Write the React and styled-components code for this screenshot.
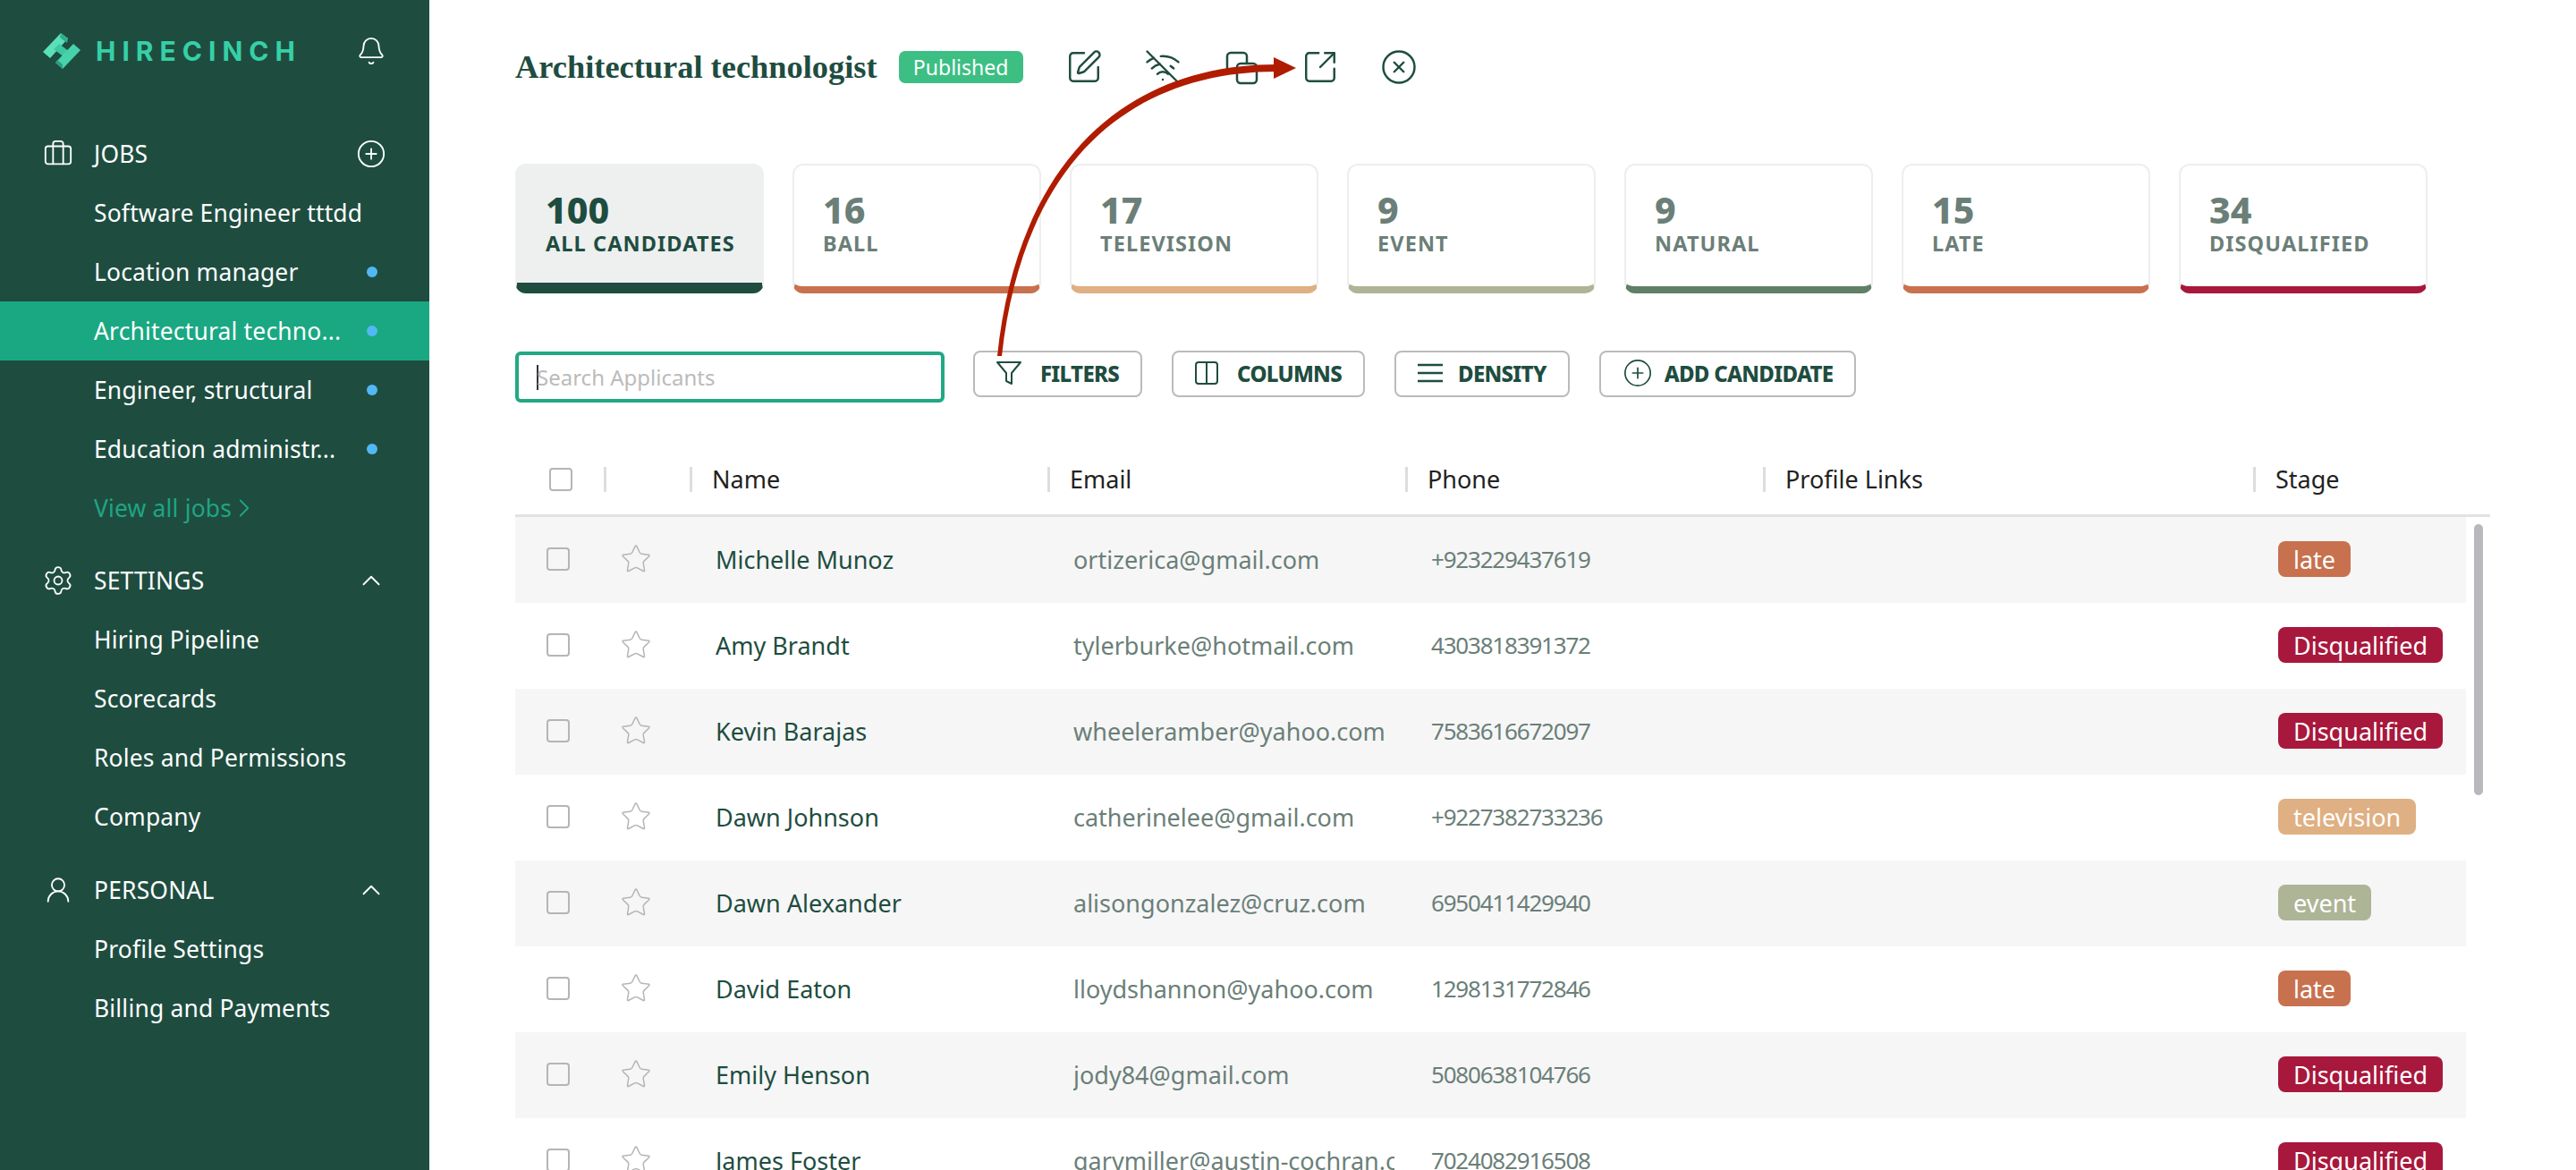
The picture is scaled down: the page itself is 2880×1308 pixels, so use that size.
import React from 'react';
import styled, { createGlobalStyle } from 'styled-components';
import {
  Bell,
  Briefcase,
  ChevronRight,
  ChevronUp,
  CirclePlus,
  CircleX,
  Settings,
  SquareArrowOutUpRight,
  SquarePen,
  Star,
  UserRound,
  WifiOff,
} from 'lucide-react';

const GREEN = '#1e4d40';
const MUTED = '#6b7f78';
const FONT = '"Noto Sans", "Open Sans", sans-serif';

const STAGES = {
  late: '#c8714f',
  Disqualified: '#a8183c',
  television: '#dfb083',
  event: '#adb596',
};

const CARDS = [
  { count: 100, label: 'ALL CANDIDATES', color: GREEN, active: true },
  { count: 16, label: 'BALL', color: '#c8714f' },
  { count: 17, label: 'TELEVISION', color: '#dfb083' },
  { count: 9, label: 'EVENT', color: '#adb596' },
  { count: 9, label: 'NATURAL', color: '#5f7f66' },
  { count: 15, label: 'LATE', color: '#c8714f' },
  { count: 34, label: 'DISQUALIFIED', color: '#a8183c' },
];

const PEOPLE = [
  ['Michelle Munoz', 'ortizerica@gmail.com', '+923229437619', 'late'],
  ['Amy Brandt', 'tylerburke@hotmail.com', '4303818391372', 'Disqualified'],
  ['Kevin Barajas', 'wheeleramber@yahoo.com', '7583616672097', 'Disqualified'],
  ['Dawn Johnson', 'catherinelee@gmail.com', '+9227382733236', 'television'],
  ['Dawn Alexander', 'alisongonzalez@cruz.com', '6950411429940', 'event'],
  ['David Eaton', 'lloydshannon@yahoo.com', '1298131772846', 'late'],
  ['Emily Henson', 'jody84@gmail.com', '5080638104766', 'Disqualified'],
  ['James Foster', 'garymiller@austin-cochran.com', '7024082916508', 'Disqualified'],
];

const GlobalStyle = createGlobalStyle`
  html, body {
    margin: 0;
    height: 100%;
    overflow: hidden;
    background: #fff;
    font-family: ${FONT};
  }
  * { box-sizing: border-box; }
`;

const Page = styled.div`
  position: relative;
  display: flex;
  width: 2880px;
  height: 1308px;
  overflow: hidden;
`;

const Sidebar = styled.aside`
  flex: 0 0 480px;
  background: ${GREEN};
  color: #fff;
`;

const Brand = styled.div`
  display: flex;
  align-items: center;
  height: 114px;
  padding: 0 48px 0 48px;
  margin-bottom: 25px;
`;

const BrandName = styled.span`
  margin-left: 17px;
  font: 700 30px Inter, sans-serif;
  letter-spacing: 7px;
  color: #36d0a6;
  flex: 1;
`;

const SectionHead = styled.div`
  display: flex;
  align-items: center;
  height: 66px;
  padding: 0 48px 0 47px;
  margin-top: ${(p) => p.$gap || 0}px;
  font-size: 26.4px;
  letter-spacing: 0.2px;
`;

const SectionIcon = styled.span`
  display: flex;
  justify-content: center;
  width: 36px;
  margin-right: 22px;
`;

const SectionTitle = styled.span`
  flex: 1;
`;

const Item = styled.div`
  display: flex;
  align-items: center;
  height: 66px;
  padding: 0 50px 0 105px;
  font-size: 26.4px;
  letter-spacing: 0.2px;
  background: ${(p) => (p.$active ? '#1aa882' : 'transparent')};
`;

const ItemText = styled.span`
  flex: 1;
  white-space: nowrap;
`;

const Dot = styled.span`
  width: 12px;
  height: 12px;
  margin-right: 8px;
  border-radius: 50%;
  background: #52b8f5;
`;

const ViewAll = styled(Item)`
  color: #1fa583;

  svg {
    margin-left: -3px;
  }
`;

const Main = styled.main`
  flex: 1;
  min-width: 0;
  padding: 40px 96px 0;
`;

const TitleRow = styled.div`
  display: flex;
  align-items: center;
  height: 70px;
  margin-bottom: 73px;
  color: ${GREEN};
`;

const Title = styled.h1`
  margin: 0 24px 0 0;
  font: 700 36.4px "Liberation Serif", serif;
  white-space: nowrap;
`;

const Badge = styled.span`
  display: flex;
  align-items: center;
  justify-content: center;
  width: 139px;
  height: 36px;
  border-radius: 7px;
  background: #3dbf84;
  color: #fff;
  font-size: 23px;
`;

const TitleIcons = styled.div`
  display: flex;
  align-items: center;
  gap: 46px;
  margin-left: 47px;
`;

const Cards = styled.div`
  display: flex;
  gap: 32px;
  margin-bottom: 64px;
`;

const Card = styled.div`
  width: 278px;
  height: 145px;
  padding: 27px 32px 0;
  border: 2px solid #eee;
  border-bottom: ${(p) => (p.$active ? 12 : 8)}px solid ${(p) => p.$color};
  border-radius: 12px;
  background: ${(p) => (p.$active ? '#eeefef' : '#fff')};
  border-color: ${(p) => (p.$active ? '#eeefef' : '#eee')};
  border-bottom-color: ${(p) => p.$color};
  color: ${(p) => (p.$active ? GREEN : MUTED)};
`;

const CardCount = styled.div`
  font-size: 41px;
  font-weight: 800;
  line-height: 44px;
`;

const CardLabel = styled.div`
  margin-top: 1px;
  font-size: 23.5px;
  font-weight: 700;
  line-height: 30px;
  letter-spacing: 1.1px;
  white-space: nowrap;
`;

const Toolbar = styled.div`
  display: flex;
  align-items: flex-start;
  height: 58px;
  margin-bottom: 43px;
`;

const Search = styled.div`
  display: flex;
  align-items: center;
  width: 480px;
  height: 57px;
  margin: 1px 32px 0 0;
  padding-left: 20px;
  border: 4px solid #22a884;
  border-radius: 6px;
  font-size: 24px;
  color: #bbb;
`;

const Caret = styled.span`
  width: 2px;
  height: 28px;
  margin-right: -2px;
  background: #333;
`;

const Button = styled.div`
  display: flex;
  align-items: center;
  height: 52px;
  margin-right: 33px;
  padding: 0 24px 2px;
  gap: ${(p) => p.$gap}px;
  border: 2px solid #bbb;
  border-radius: 8px;
  color: ${GREEN};
  font-size: 24px;
  font-weight: 800;
  letter-spacing: -0.7px;
  white-space: nowrap;
`;

const COLUMNS = '99px 96px 400px 400px 400px 548px 1fr';

const HeadRow = styled.div`
  display: grid;
  grid-template-columns: ${COLUMNS};
  align-items: center;
  width: 2208px;
  height: 85px;
  padding-top: 3px;
  border-bottom: 3px solid #e2e2e2;
  color: #222;
  font-size: 27px;
`;

const HeadCell = styled.div`
  display: flex;
  align-items: center;
  height: 28px;
  padding-left: 22px;
  border-left: ${(p) => (p.$plain ? 'none' : '3px solid #ddd')};
`;

const HeadCheck = styled.div`
  width: 26px;
  height: 26px;
  margin-left: 16px;
  border: 2px solid #b5b5b5;
  border-radius: 4px;
`;

const Scroller = styled.div`
  position: relative;
  width: 2208px;
`;

const ScrollThumb = styled.div`
  position: absolute;
  top: 8px;
  right: 8px;
  width: 10px;
  height: 303px;
  border-radius: 5px;
  background: #b8b9bc;
`;

const Row = styled.div`
  display: grid;
  grid-template-columns: ${COLUMNS};
  align-items: center;
  width: 2181px;
  height: 96px;
  padding-bottom: 2px;
  background: ${(p) => (p.$odd ? '#f6f6f7' : '#fff')};
  font-size: 27px;
`;

const RowCheck = styled.div`
  width: 26px;
  height: 26px;
  margin-left: 35px;
  border: 2px solid #b5b5b5;
  border-radius: 4px;
`;

const StarCell = styled.div`
  display: flex;
  padding-left: 18px;
  color: #b5b5b5;
`;

const NameCell = styled.div`
  padding-left: 29px;
  color: ${GREEN};
`;

const MutedCell = styled.div`
  width: 359px;
  margin-left: 29px;
  overflow: hidden;
  white-space: nowrap;
  color: ${MUTED};
`;

const PhoneCell = styled(MutedCell)`
  font-size: 26px;
  letter-spacing: -1.2px;
`;

const StageCell = styled.div`
  padding-left: 28px;
`;

const Chip = styled.span`
  display: inline-flex;
  align-items: center;
  height: 40px;
  padding: 0 17px;
  border-radius: 8px;
  background: ${(p) => p.$color};
  color: #fff;
  font-size: 27px;
`;

const Overlay = styled.svg`
  position: absolute;
  top: 0;
  left: 0;
  pointer-events: none;
`;

const Logo = () => (
  <svg width="42" height="40" viewBox="0 0 42 40" fill="none">
    <path d="M0 21 20 0l8 6L8 28z" fill="#5ce0ba" />
    <path d="M20 0l8 6-1 5-8-6z" fill="#2fae8f" />
    <path d="M12 18l6-6 12 9-6 6z" fill="#3cc9a2" />
    <path d="M14 33 34 12l8 7-20 21z" fill="#46d3ac" />
    <path d="M14 33l8 7 0-5-6-5z" fill="#2a9d81" />
  </svg>
);

const CopyIcon = () => (
  <svg width="42" height="42" viewBox="0 0 42 42" fill="none" stroke={GREEN} strokeWidth="2.5">
    <path d="M5 27V9a4 4 0 0 1 4-4h14a4 4 0 0 1 4 4v7" />
    <rect x="16" y="17" width="22" height="22" rx="4" />
  </svg>
);

const FilterIcon = () => (
  <svg width="28" height="26" viewBox="0 0 28 26" fill="none" stroke={GREEN} strokeWidth="2">
    <path d="M1 1h26L17 13v12l-6-3V13z" strokeLinejoin="round" />
  </svg>
);

const ColumnsIcon = () => (
  <svg width="26" height="26" viewBox="0 0 26 26" fill="none" stroke={GREEN} strokeWidth="2">
    <rect x="1" y="1" width="24" height="24" rx="3" />
    <path d="M13 1v24" />
  </svg>
);

const DensityIcon = () => (
  <svg width="28" height="22" viewBox="0 0 28 22" fill="none" stroke={GREEN} strokeWidth="2.4">
    <path d="M0 2h28M0 11h28M0 20h28" />
  </svg>
);

const App = () => (
  <Page>
    <GlobalStyle />
    <Sidebar>
      <Brand>
        <Logo />
        <BrandName>HIRECINCH</BrandName>
        <Bell size={34} strokeWidth={1.3} />
      </Brand>
      <SectionHead>
        <SectionIcon><Briefcase size={34} strokeWidth={1.3} /></SectionIcon>
        <SectionTitle>JOBS</SectionTitle>
        <CirclePlus size={34} strokeWidth={1.3} />
      </SectionHead>
      <Item><ItemText>Software Engineer tttdd</ItemText></Item>
      <Item><ItemText>Location manager</ItemText><Dot /></Item>
      <Item $active><ItemText>Architectural techno...</ItemText><Dot /></Item>
      <Item><ItemText>Engineer, structural</ItemText><Dot /></Item>
      <Item><ItemText>Education administr...</ItemText><Dot /></Item>
      <ViewAll>View all jobs<ChevronRight size={34} strokeWidth={1.3} /></ViewAll>
      <SectionHead $gap={15}>
        <SectionIcon><Settings size={38} strokeWidth={1.2} /></SectionIcon>
        <SectionTitle>SETTINGS</SectionTitle>
        <ChevronUp size={34} strokeWidth={1.3} />
      </SectionHead>
      <Item><ItemText>Hiring Pipeline</ItemText></Item>
      <Item><ItemText>Scorecards</ItemText></Item>
      <Item><ItemText>Roles and Permissions</ItemText></Item>
      <Item><ItemText>Company</ItemText></Item>
      <SectionHead $gap={16}>
        <SectionIcon><UserRound size={34} strokeWidth={1.3} /></SectionIcon>
        <SectionTitle>PERSONAL</SectionTitle>
        <ChevronUp size={34} strokeWidth={1.3} />
      </SectionHead>
      <Item><ItemText>Profile Settings</ItemText></Item>
      <Item><ItemText>Billing and Payments</ItemText></Item>
    </Sidebar>

    <Main>
      <TitleRow>
        <Title>Architectural technologist</Title>
        <Badge>Published</Badge>
        <TitleIcons>
          <SquarePen size={42} strokeWidth={1.4} />
          <WifiOff size={42} strokeWidth={1.4} />
          <CopyIcon />
          <SquareArrowOutUpRight size={42} strokeWidth={1.4} />
          <CircleX size={42} strokeWidth={1.4} />
        </TitleIcons>
      </TitleRow>

      <Cards>
        {CARDS.map((c) => (
          <Card key={c.label} $color={c.color} $active={c.active}>
            <CardCount>{c.count}</CardCount>
            <CardLabel>{c.label}</CardLabel>
          </Card>
        ))}
      </Cards>

      <Toolbar>
        <Search><Caret />Search Applicants</Search>
        <Button $gap={21}><FilterIcon />FILTERS</Button>
        <Button $gap={21}><ColumnsIcon />COLUMNS</Button>
        <Button $gap={17}><DensityIcon />DENSITY</Button>
        <Button $gap={13}><CirclePlus size={34} strokeWidth={1.2} />ADD CANDIDATE</Button>
      </Toolbar>

      <HeadRow>
        <HeadCell $plain><HeadCheck /></HeadCell>
        <HeadCell />
        <HeadCell>Name</HeadCell>
        <HeadCell>Email</HeadCell>
        <HeadCell>Phone</HeadCell>
        <HeadCell>Profile Links</HeadCell>
        <HeadCell>Stage</HeadCell>
      </HeadRow>

      <Scroller>
        <ScrollThumb />
        {PEOPLE.map(([name, email, phone, stage], i) => (
          <Row key={name} $odd={i % 2 === 0}>
            <RowCheck />
            <StarCell><Star size={36} strokeWidth={1} /></StarCell>
            <NameCell>{name}</NameCell>
            <MutedCell>{email}</MutedCell>
            <PhoneCell>{phone}</PhoneCell>
            <div />
            <StageCell><Chip $color={STAGES[stage]}>{stage}</Chip></StageCell>
          </Row>
        ))}
      </Scroller>
    </Main>

    <Overlay width="2880" height="1308" viewBox="0 0 2880 1308">
      <path d="M1115 398C1138 180 1258 72 1428 72V80C1262 80 1144 182 1120 398Z" fill="#b01c00" />
      <path d="M1424 64l25 12-25 12z" fill="#b01c00" />
    </Overlay>
  </Page>
);

export default App;
